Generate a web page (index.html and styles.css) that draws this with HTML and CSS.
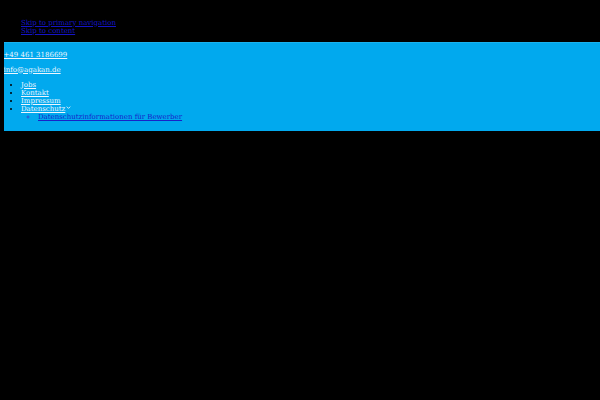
FILE: index.html
```html
<!DOCTYPE html>
<html lang="de">
<head>
<meta charset="utf-8">
<title>agakan</title>
<link rel="stylesheet" href="styles.css">
</head>
<body>
<ul class="skip">
  <li><a href="#nav">Skip to primary navigation</a></li>
  <li><a href="#content">Skip to content</a></li>
</ul>
<header class="top">
  <p class="line"><a class="light" href="#">+49 461 3186699</a></p>
  <p class="line"><a class="light" href="#">info@agakan.de</a></p>
  <ul class="menu" id="nav">
    <li><a class="light" href="#">Jobs</a></li>
    <li><a class="light" href="#">Kontakt</a></li>
    <li><a class="light" href="#">Impressum</a></li>
    <li><a class="light" href="#">Datenschutz</a><svg class="chev" viewBox="0 0 10 10" width="5" height="5"><path d="M1.5 3.2 5 6.8 8.5 3.2" fill="none" stroke="#fff" stroke-width="1.6"/></svg>
      <ul class="sub">
        <li><a class="dark" href="#">Datenschutzinformationen für Bewerber</a></li>
      </ul>
    </li>
  </ul>
</header>
</body>
</html>
```
FILE: styles.css
```css
html, body {
  background: #000;
}
body {
  margin: 3.5px 0 0 3.5px;
  font-family: "DejaVu Serif", serif;
  font-size: 7px;
  line-height: 8px;
  color: #000;
}
a {
  color: #1414c8;
}
.skip {
  margin: 15px 0 0;
  padding-left: 17.5px;
  list-style: none;
}
.top {
  margin-top: 7px;
  background: #01a9ee;
  border-top: 1px solid #19b3f0;
  padding: 1px 0 3px;
}
.line {
  margin: 7px 0;
}
.light {
  color: #eef6ff;
}
.dark {
  color: #1822c8;
}
.menu {
  margin: 7px 0;
  padding-left: 17.5px;
  list-style: disc;
}
.sub {
  margin: 0;
  padding-left: 17px;
  list-style: circle;
  color: #3050d0;
}
.chev {
  margin-left: 1px;
  vertical-align: 1px;
}
```
